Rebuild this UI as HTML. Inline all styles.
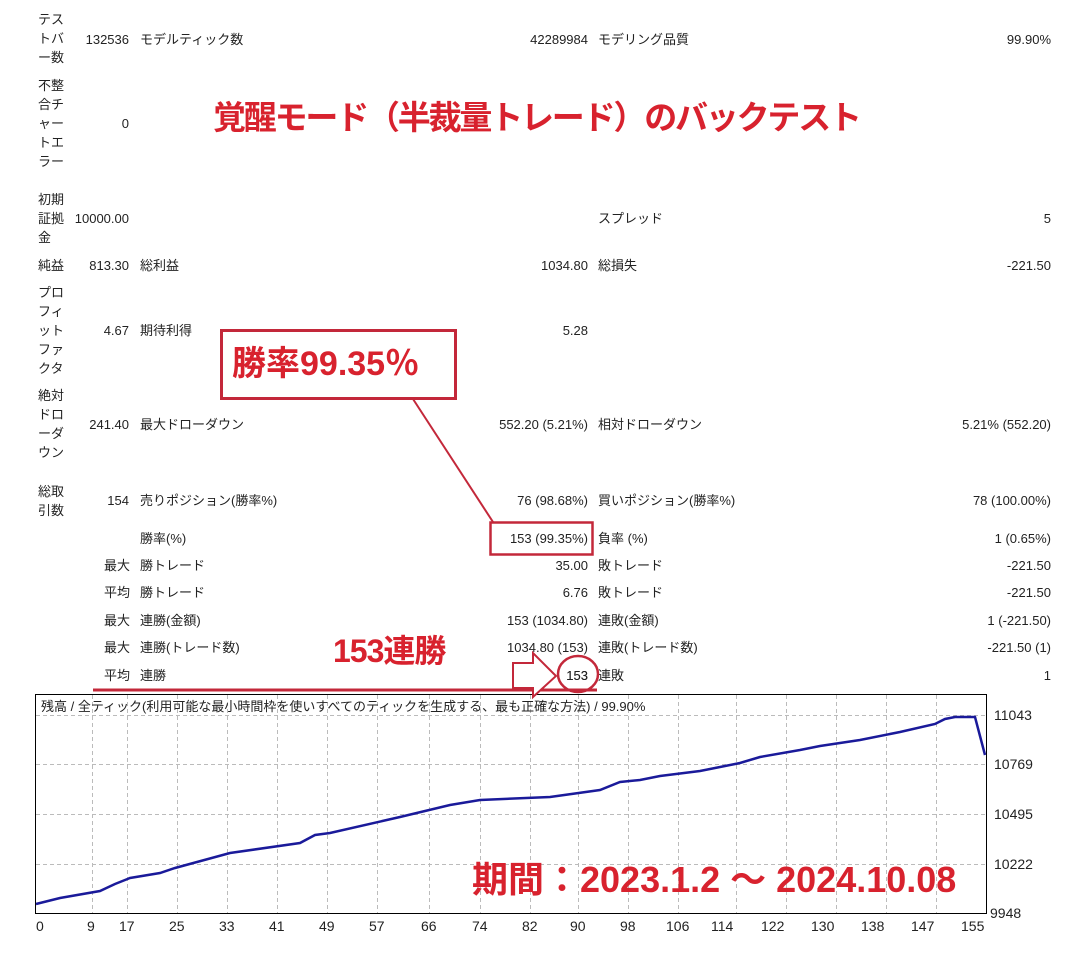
<!DOCTYPE html>
<html><head><meta charset="utf-8"><style>
body{margin:0;width:1078px;height:953px;background:#fff;position:relative;overflow:hidden;font-family:"Liberation Sans","Noto Sans CJK JP",sans-serif;font-size:13px;color:#222}
.t{position:absolute;white-space:nowrap;line-height:19px}
.r{text-align:right}
.red{position:absolute;color:#d8222e;font-weight:bold;white-space:nowrap;font-family:"Liberation Sans","Noto Sans CJK JP",sans-serif}
</style></head><body>
<div class="t" style="left:38px;top:10px">テス<br>トバ<br>ー数</div>
<div class="t r" style="right:949px;top:30px">132536</div>
<div class="t" style="left:140px;top:30px">モデルティック数</div>
<div class="t r" style="right:490px;top:30px">42289984</div>
<div class="t" style="left:598px;top:30px">モデリング品質</div>
<div class="t r" style="right:27px;top:30px">99.90%</div>

<div class="t" style="left:38px;top:76px">不整<br>合チ<br>ャー<br>トエ<br>ラー</div>
<div class="t r" style="right:949px;top:114px">0</div>

<div class="t" style="left:38px;top:190px">初期<br>証拠<br>金</div>
<div class="t r" style="right:949px;top:209px">10000.00</div>
<div class="t" style="left:598px;top:209px">スプレッド</div>
<div class="t r" style="right:27px;top:209px">5</div>

<div class="t" style="left:38px;top:256px">純益</div>
<div class="t r" style="right:949px;top:256px">813.30</div>
<div class="t" style="left:140px;top:256px">総利益</div>
<div class="t r" style="right:490px;top:256px">1034.80</div>
<div class="t" style="left:598px;top:256px">総損失</div>
<div class="t r" style="right:27px;top:256px">-221.50</div>

<div class="t" style="left:38px;top:283px">プロ<br>フィ<br>ット<br>ファ<br>クタ</div>
<div class="t r" style="right:949px;top:321px">4.67</div>
<div class="t" style="left:140px;top:321px">期待利得</div>
<div class="t r" style="right:490px;top:321px">5.28</div>

<div class="t" style="left:38px;top:386px">絶対<br>ドロ<br>ーダ<br>ウン</div>
<div class="t r" style="right:949px;top:415px">241.40</div>
<div class="t" style="left:140px;top:415px">最大ドローダウン</div>
<div class="t r" style="right:490px;top:415px">552.20 (5.21%)</div>
<div class="t" style="left:598px;top:415px">相対ドローダウン</div>
<div class="t r" style="right:27px;top:415px">5.21% (552.20)</div>

<div class="t" style="left:38px;top:482px">総取<br>引数</div>
<div class="t r" style="right:949px;top:491px">154</div>
<div class="t" style="left:140px;top:491px">売りポジション(勝率%)</div>
<div class="t r" style="right:490px;top:491px">76 (98.68%)</div>
<div class="t" style="left:598px;top:491px">買いポジション(勝率%)</div>
<div class="t r" style="right:27px;top:491px">78 (100.00%)</div>

<div class="t" style="left:140px;top:529px">勝率(%)</div>
<div class="t r" style="right:490px;top:529px">153 (99.35%)</div>
<div class="t" style="left:598px;top:529px">負率 (%)</div>
<div class="t r" style="right:27px;top:529px">1 (0.65%)</div>

<div class="t" style="left:104px;top:556px">最大</div>
<div class="t" style="left:140px;top:556px">勝トレード</div>
<div class="t r" style="right:490px;top:556px">35.00</div>
<div class="t" style="left:598px;top:556px">敗トレード</div>
<div class="t r" style="right:27px;top:556px">-221.50</div>

<div class="t" style="left:104px;top:583px">平均</div>
<div class="t" style="left:140px;top:583px">勝トレード</div>
<div class="t r" style="right:490px;top:583px">6.76</div>
<div class="t" style="left:598px;top:583px">敗トレード</div>
<div class="t r" style="right:27px;top:583px">-221.50</div>

<div class="t" style="left:104px;top:611px">最大</div>
<div class="t" style="left:140px;top:611px">連勝(金額)</div>
<div class="t r" style="right:490px;top:611px">153 (1034.80)</div>
<div class="t" style="left:598px;top:611px">連敗(金額)</div>
<div class="t r" style="right:27px;top:611px">1 (-221.50)</div>

<div class="t" style="left:104px;top:638px">最大</div>
<div class="t" style="left:140px;top:638px">連勝(トレード数)</div>
<div class="t r" style="right:490px;top:638px">1034.80 (153)</div>
<div class="t" style="left:598px;top:638px">連敗(トレード数)</div>
<div class="t r" style="right:27px;top:638px">-221.50 (1)</div>

<div class="t" style="left:104px;top:666px">平均</div>
<div class="t" style="left:140px;top:666px">連勝</div>
<div class="t r" style="right:490px;top:666px">153</div>
<div class="t" style="left:598px;top:666px">連敗</div>
<div class="t r" style="right:27px;top:666px">1</div>

<div class="red" style="left:213px;top:97px;font-size:33px;line-height:42px;letter-spacing:-2.2px">覚醒モード（半裁量トレード）のバックテスト</div>

<svg style="position:absolute;left:0;top:0" width="1078" height="953">
<rect x="35.5" y="694.5" width="951" height="219" fill="none" stroke="#000" stroke-width="1"/>
<g stroke="#bbb" stroke-dasharray="4,3" stroke-width="1">
<line x1="36" y1="715.5" x2="986" y2="715.5"/><line x1="36" y1="764.5" x2="986" y2="764.5"/><line x1="36" y1="814.5" x2="986" y2="814.5"/><line x1="36" y1="864.5" x2="986" y2="864.5"/>
<line x1="92.5" y1="695" x2="92.5" y2="913"/><line x1="127.5" y1="695" x2="127.5" y2="913"/><line x1="177.5" y1="695" x2="177.5" y2="913"/><line x1="227.5" y1="695" x2="227.5" y2="913"/><line x1="277.5" y1="695" x2="277.5" y2="913"/><line x1="327.5" y1="695" x2="327.5" y2="913"/><line x1="377.5" y1="695" x2="377.5" y2="913"/><line x1="429.5" y1="695" x2="429.5" y2="913"/><line x1="480.5" y1="695" x2="480.5" y2="913"/><line x1="530.5" y1="695" x2="530.5" y2="913"/><line x1="578.5" y1="695" x2="578.5" y2="913"/><line x1="628.5" y1="695" x2="628.5" y2="913"/><line x1="678.5" y1="695" x2="678.5" y2="913"/><line x1="736.5" y1="695" x2="736.5" y2="913"/><line x1="786.5" y1="695" x2="786.5" y2="913"/><line x1="836.5" y1="695" x2="836.5" y2="913"/><line x1="886.5" y1="695" x2="886.5" y2="913"/><line x1="936.5" y1="695" x2="936.5" y2="913"/>
</g>
<polyline fill="none" stroke="#1a1a9a" stroke-width="2.5" points="36,904 60,898 100,891 115,884 130,878 160,873 175,868 230,853 300,843 315,835 330,833 400,817 450,805 480,800 550,797 600,790 620,782 640,780 660,776 700,771 740,763 760,757 800,750 820,746 860,740 900,732 935,724 945,719 955,717 975,717 985,755"/>
<line x1="413" y1="399" x2="493" y2="522" stroke="#c3283a" stroke-width="2"/>
<rect x="221.5" y="330.5" width="234" height="68" fill="#fff" stroke="#c3283a" stroke-width="3"/>
<rect x="490.5" y="522.5" width="102" height="32" fill="none" stroke="#c3283a" stroke-width="2.5"/>
<line x1="93" y1="690" x2="597" y2="690" stroke="#c3283a" stroke-width="3"/>
<polygon points="513,663 533,663 533,653 556,676 533,697 533,688 513,688" fill="#fff" stroke="#c3283a" stroke-width="2"/>
<ellipse cx="578" cy="674" rx="20" ry="18" fill="none" stroke="#c3283a" stroke-width="2.5"/>
</svg>
<div class="t r" style="right:490px;top:666px;background:transparent">153</div>
<div class="red" style="left:232px;top:342px;font-size:34px;line-height:44px">勝率99.35％</div>
<div class="red" style="left:333px;top:630px;font-size:32px;line-height:42px;letter-spacing:-1px">153連勝</div>
<div class="red" style="left:472px;top:857px;font-size:36px;line-height:46px">期間：2023.1.2 ～ 2024.10.08</div>

<div class="t" style="left:41px;top:697px">残高 / 全ティック(利用可能な最小時間枠を使いすべてのティックを生成する、最も正確な方法) / 99.90%</div>
<div class="t" style="left:994px;top:706px;font-size:14px">11043</div>
<div class="t" style="left:994px;top:755px;font-size:14px">10769</div>
<div class="t" style="left:994px;top:805px;font-size:14px">10495</div>
<div class="t" style="left:994px;top:855px;font-size:14px">10222</div>
<div class="t" style="left:990px;top:904px;font-size:14px">9948</div>
<div style="position:absolute;top:917px;left:0;font-size:14px;line-height:19px">
<span class="t" style="left:36px">0</span><span class="t" style="left:87px">9</span><span class="t" style="left:119px">17</span><span class="t" style="left:169px">25</span><span class="t" style="left:219px">33</span><span class="t" style="left:269px">41</span><span class="t" style="left:319px">49</span><span class="t" style="left:369px">57</span><span class="t" style="left:421px">66</span><span class="t" style="left:472px">74</span><span class="t" style="left:522px">82</span><span class="t" style="left:570px">90</span><span class="t" style="left:620px">98</span><span class="t" style="left:666px">106</span><span class="t" style="left:711px">114</span><span class="t" style="left:761px">122</span><span class="t" style="left:811px">130</span><span class="t" style="left:861px">138</span><span class="t" style="left:911px">147</span><span class="t" style="left:961px">155</span>
</div>
</body></html>
